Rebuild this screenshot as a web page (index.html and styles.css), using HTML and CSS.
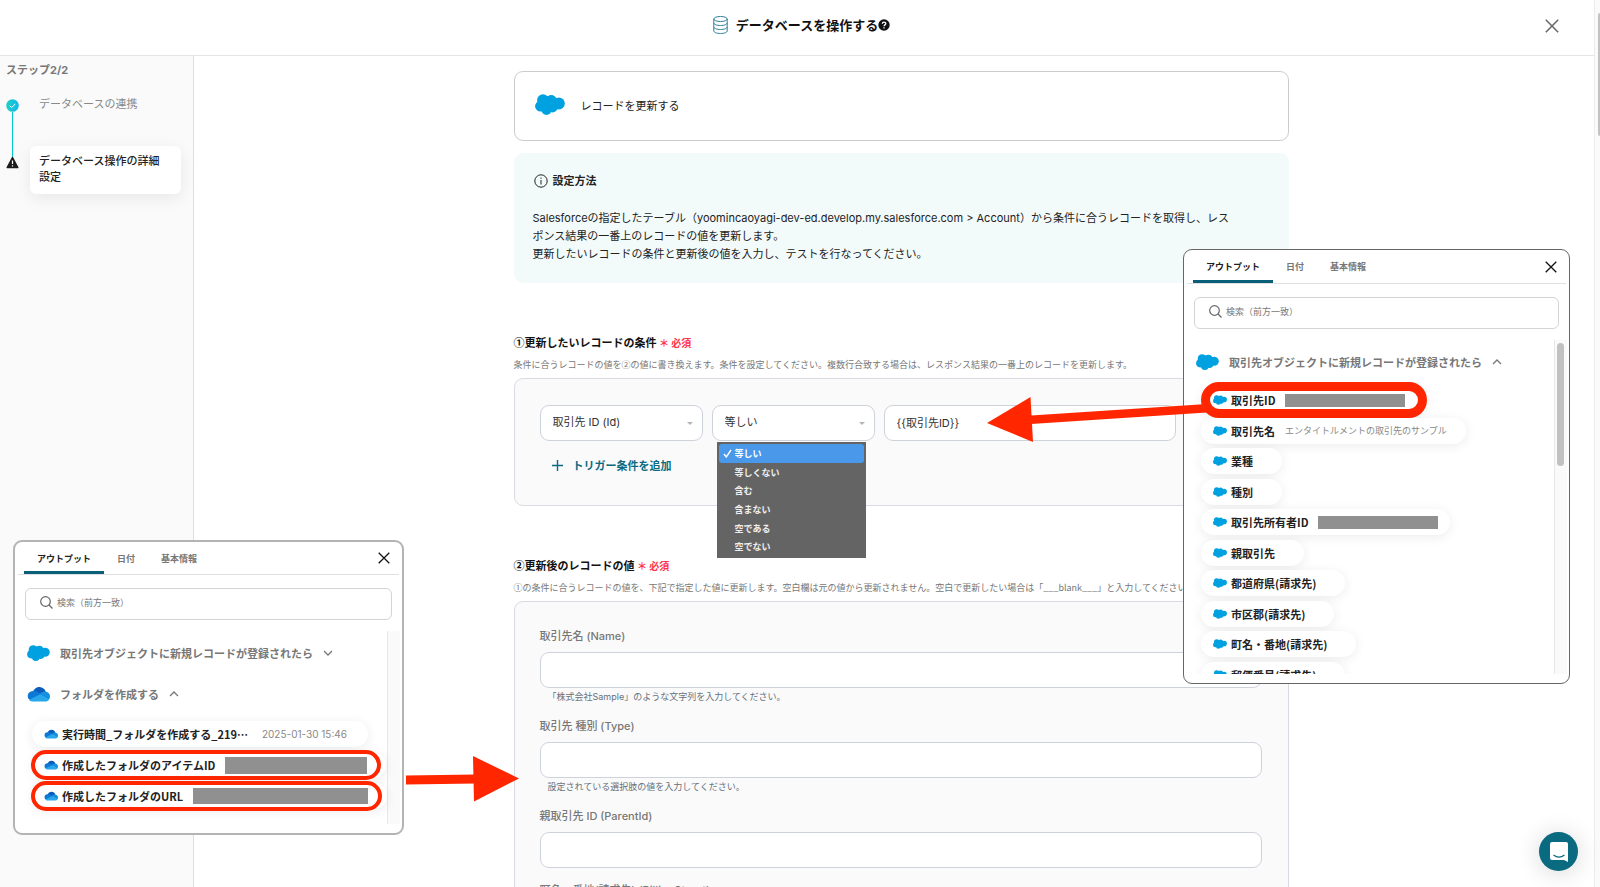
FILE: index.html
```
<!DOCTYPE html>
<html lang="ja">

<head>
    <meta charset="UTF-8">
    <meta name="viewport" content="width=device-width, initial-scale=1.0">
    <title>データベースを操作する</title>
    <link rel="stylesheet" href="styles.css">
</head>

<body>

    <!-- shared icons -->
    <svg class="sprite" aria-hidden="true">
        <symbol id="salesforce" viewBox="0 0 30 21">
            <g fill="#00a1e0">
                <circle cx="8" cy="6.2" r="5.9"/>
                <circle cx="16.3" cy="6" r="5"/>
                <circle cx="23.8" cy="9.5" r="6"/>
                <circle cx="5.5" cy="12.2" r="5.4"/>
                <circle cx="11.5" cy="15.800" r="5.1"/>
                <circle cx="17.5" cy="13.500" r="5"/>
                <ellipse cx="14" cy="10" rx="11" ry="8"/>
            </g>
        </symbol>
        <symbol id="onedrive" viewBox="0 0 24 16">
            <path fill="#0a5dbb" d="M6 6.2C7.2 2.4 10 .4 13.2.6c3 .2 5.4 2 6.3 4.9L13 10z"/>
            <path fill="#0d78d6" d="M5 5.2c2.400-.600 4.600-.2 6.500 1L16 9 3.500 14.600A5 5 0 0 1 5 5.200z"/>
            <path fill="#1590df" d="M19 5.400c3 .1 5 2.300 5 5 0 1.500-.5 2.700-1.400 3.700L12.500 8.200C14.500 6.600 16.500 5.300 19 5.400z"/>
            <path fill="#28a8ea" d="M13.500 8.400l9.700 5c-.9 1.500-2.300 2.400-4.200 2.400H5.500c-1.500 0-2.600-.6-3.400-1.700z"/>
        </symbol>
        <symbol id="close" viewBox="0 0 12 12">
            <path d="M.7.7l10.600 10.600M11.300.7L.7 11.300" fill="none" stroke="currentColor" stroke-width="1.300"/>
        </symbol>
        <symbol id="search" viewBox="0 0 13 13">
            <circle cx="5.500" cy="5.500" r="4.800" fill="none" stroke="currentColor" stroke-width="1.200"/>
            <path d="M9 9l3.500 3.500" fill="none" stroke="currentColor" stroke-width="1.200"/>
        </symbol>
        <symbol id="up" viewBox="0 0 10 6">
            <path d="M1 5l4-4 4 4" fill="none" stroke="currentColor" stroke-width="1.300"/>
        </symbol>
        <symbol id="down" viewBox="0 0 10 6">
            <path d="M1 1l4 4 4-4" fill="none" stroke="currentColor" stroke-width="1.300"/>
        </symbol>
    </svg>

    <header class="header">
        <svg class="db-icon" viewBox="0 0 15 18" fill="none" stroke="#2f8299">
            <ellipse cx="7.500" cy="3" rx="6.700" ry="2.500"/>
            <path d="M.8 3v12c0 1.400 3 2.500 6.700 2.500s6.700-1.100 6.700-2.500V3M.8 7c0 1.400 3 2.500 6.700 2.500S14.200 8.400 14.200 7M.8 11c0 1.400 3 2.500 6.700 2.500s6.700-1.100 6.700-2.500"/>
        </svg>
        <h1 class="title">データベースを操作する</h1>
        <svg class="help-icon" viewBox="0 0 12 12">
            <circle cx="6" cy="6" r="5.700" fill="#111"/>
            <path d="M4.300 4.700c0-2.200 3.500-2.200 3.500-.1C7.800 5.900 6 5.900 6 7.300M6 8.300v1.300" fill="none" stroke="#fff" stroke-width="1.300"/>
        </svg>
        <button class="header-close" aria-label="閉じる"><svg><use href="#close"/></svg></button>
    </header>

    <div class="page">
        <aside class="sidebar">
            <div class="step-count">ステップ2/2</div>
            <ol class="steps">
                <li class="step">
                    <svg class="step-icon" viewBox="0 0 13 13">
                        <defs>
                            <linearGradient id="done"><stop offset="0" stop-color="#1fcfc4"/><stop offset="1" stop-color="#12b8ee"/></linearGradient>
                        </defs>
                        <circle cx="6.500" cy="6.500" r="6.300" fill="url(#done)"/>
                        <path d="M3.700 6.700l2 2 3.600-3.900" fill="none" stroke="#fff"/>
                    </svg>
                    <span class="step-name">データベースの連携</span>
                </li>
                <li class="step">
                    <svg class="step-icon" viewBox="0 0 13 13">
                        <path d="M6.500 1.500l5.300 10H1.200z" fill="#1c1c1c" stroke="#1c1c1c" stroke-width="1.500" stroke-linejoin="round"/>
                        <path d="M6.500 4.500v3.500M6.500 9.200v1.400" stroke="#fff" stroke-width="1.200"/>
                    </svg>
                    <span class="step-name active">データベース操作の詳細設定</span>
                </li>
            </ol>
        </aside>

        <main class="main">
            <div class="content">
                <div class="action-card">
                    <svg class="action-icon"><use href="#salesforce"/></svg>
                    <span>レコードを更新する</span>
                </div>

                <section class="info">
                    <h2 class="info-title">
                        <svg class="info-icon" viewBox="0 0 14 14" fill="none" stroke="#222">
                            <circle cx="7" cy="7" r="6.200"/>
                            <path d="M7 6v4.500M7 3.500v1.300"/>
                        </svg>
                        設定方法
                    </h2>
                    <p class="info-text">Salesforceの指定したテーブル（yoomincaoyagi-dev-ed.develop.my.salesforce.com &gt; Account）から条件に合うレコードを取得し、レス<br>ポンス結果の一番上のレコードの値を更新します。<br>更新したいレコードの条件と更新後の値を入力し、テストを行なってください。</p>
                </section>

                <section class="block">
                    <h2 class="block-title">①更新したいレコードの条件 <span class="required">＊ 必須</span></h2>
                    <p class="block-note">条件に合うレコードの値を②の値に書き換えます。条件を設定してください。複数行合致する場合は、レスポンス結果の一番上のレコードを更新します。</p>
                    <div class="panel">
                        <div class="condition">
                            <div class="select-box">
                                <select class="control" aria-label="項目">
                                    <option>取引先 ID (Id)</option>
                                </select>
                            </div>
                            <div class="select-box">
                                <select class="control" aria-label="条件">
                                    <option>等しい</option>
                                    <option>等しくない</option>
                                    <option>含む</option>
                                    <option>含まない</option>
                                    <option>空である</option>
                                    <option>空でない</option>
                                </select>
                                <ul class="menu">
                                    <li class="menu-item selected">
                                        <svg class="check" viewBox="0 0 9 9"><path d="M1 5l2.300 3L8 1" fill="none" stroke="#fff" stroke-width="1.400"/></svg>等しい
                                    </li>
                                    <li class="menu-item">等しくない</li>
                                    <li class="menu-item">含む</li>
                                    <li class="menu-item">含まない</li>
                                    <li class="menu-item">空である</li>
                                    <li class="menu-item">空でない</li>
                                </ul>
                            </div>
                            <input class="control value" type="text" value="{{取引先ID}}" aria-label="値">
                        </div>
                        <button class="add">
                            <svg class="plus" viewBox="0 0 11 11"><path d="M5.500 0v11M0 5.500h11" stroke="currentColor" stroke-width="1.400"/></svg>
                            トリガー条件を追加
                        </button>
                    </div>
                </section>

                <section class="block">
                    <h2 class="block-title">②更新後のレコードの値 <span class="required">＊ 必須</span></h2>
                    <p class="block-note">①の条件に合うレコードの値を、下記で指定した値に更新します。空白欄は元の値から更新されません。空白で更新したい場合は「___blank___」と入力してください。</p>
                    <div class="panel fields">
                        <div class="field">
                            <label class="field-label" for="name">取引先名 (Name)</label>
                            <input class="control" type="text" id="name">
                            <p class="field-note">「株式会社Sample」のような文字列を入力してください。</p>
                        </div>
                        <div class="field">
                            <label class="field-label" for="type">取引先 種別 (Type)</label>
                            <input class="control" type="text" id="type">
                            <p class="field-note">設定されている選択肢の値を入力してください。</p>
                        </div>
                        <div class="field">
                            <label class="field-label" for="parent">親取引先 ID (ParentId)</label>
                            <input class="control" type="text" id="parent">
                        </div>
                        <div class="field">
                            <label class="field-label" for="street">町名・番地(請求先) (BillingStreet)</label>
                            <input class="control" type="text" id="street">
                        </div>
                    </div>
                </section>
            </div>
        </main>
    </div>

    <div class="page-scroll"><div class="page-thumb"></div></div>

    <section class="popup popup-left">
        <div class="tabs">
            <button class="tab current">アウトプット</button>
            <button class="tab">日付</button>
            <button class="tab">基本情報</button>
            <button class="popup-close" aria-label="閉じる"><svg><use href="#close"/></svg></button>
        </div>
        <div class="search">
            <svg class="search-icon"><use href="#search"/></svg>
            <input class="search-input" type="text" placeholder="検索（前方一致）" aria-label="検索">
        </div>
        <div class="results">
            <div class="list">
                <button class="group">
                    <svg class="group-icon"><use href="#salesforce"/></svg>
                    取引先オブジェクトに新規レコードが登録されたら
                    <svg class="chevron"><use href="#down"/></svg>
                </button>
                <button class="group">
                    <svg class="group-icon"><use href="#onedrive"/></svg>
                    フォルダを作成する
                    <svg class="chevron"><use href="#up"/></svg>
                </button>
                <ul class="pills">
                    <li class="pill"><svg class="pill-icon"><use href="#onedrive"/></svg><b>実行時間_フォルダを作成する_219…</b><span class="date">2025-01-30 15:46</span></li>
                    <li class="pill marked-thin"><svg class="pill-icon"><use href="#onedrive"/></svg><b>作成したフォルダのアイテムID</b><i class="mask mask-item"></i></li>
                    <li class="pill marked-thin"><svg class="pill-icon"><use href="#onedrive"/></svg><b>作成したフォルダのURL</b><i class="mask mask-url"></i></li>
                </ul>
            </div>
            <div class="track"></div>
        </div>
    </section>

    <section class="popup popup-right">
        <div class="tabs">
            <button class="tab current">アウトプット</button>
            <button class="tab">日付</button>
            <button class="tab">基本情報</button>
            <button class="popup-close" aria-label="閉じる"><svg><use href="#close"/></svg></button>
        </div>
        <div class="search">
            <svg class="search-icon"><use href="#search"/></svg>
            <input class="search-input" type="text" placeholder="検索（前方一致）" aria-label="検索">
        </div>
        <div class="results">
            <div class="list">
                <button class="group">
                    <svg class="group-icon"><use href="#salesforce"/></svg>
                    取引先オブジェクトに新規レコードが登録されたら
                    <svg class="chevron"><use href="#up"/></svg>
                </button>
                <ul class="pills">
                    <li class="pill marked"><svg class="pill-icon"><use href="#salesforce"/></svg><b>取引先ID</b><i class="mask"></i></li>
                    <li class="pill"><svg class="pill-icon"><use href="#salesforce"/></svg><b>取引先名</b><span>エンタイトルメントの取引先のサンプル</span></li>
                    <li class="pill"><svg class="pill-icon"><use href="#salesforce"/></svg><b>業種</b></li>
                    <li class="pill"><svg class="pill-icon"><use href="#salesforce"/></svg><b>種別</b></li>
                    <li class="pill owner"><svg class="pill-icon"><use href="#salesforce"/></svg><b>取引先所有者ID</b><i class="mask"></i></li>
                    <li class="pill"><svg class="pill-icon"><use href="#salesforce"/></svg><b>親取引先</b></li>
                    <li class="pill"><svg class="pill-icon"><use href="#salesforce"/></svg><b>都道府県(請求先)</b></li>
                    <li class="pill"><svg class="pill-icon"><use href="#salesforce"/></svg><b>市区郡(請求先)</b></li>
                    <li class="pill"><svg class="pill-icon"><use href="#salesforce"/></svg><b>町名・番地(請求先)</b></li>
                    <li class="pill"><svg class="pill-icon"><use href="#salesforce"/></svg><b>郵便番号(請求先)</b></li>
                </ul>
            </div>
            <div class="track"><div class="thumb"></div></div>
        </div>
    </section>

    <svg class="arrow arrow-id" viewBox="0 0 220 46">
        <path d="M44 18.500L220 7v8.500L44 27z" fill="#ff2600"/>
        <path d="M0 26L43.500 0l2.500 45z" fill="#ff2600"/>
    </svg>
    <svg class="arrow arrow-fields" viewBox="0 0 113 46">
        <path d="M0 19.500l70-1v9l-70 1z" fill="#ff2600"/>
        <path d="M67 0l46 22.500L68 45.500z" fill="#ff2600"/>
    </svg>

    <button class="chat" aria-label="チャット">
        <svg class="chat-icon" viewBox="0 0 18 20">
            <path d="M2 0h14a2 2 0 0 1 2 2v18l-4-2H2a2 2 0 0 1-2-2V2a2 2 0 0 1 2-2z" fill="#fff"/>
            <path d="M3.500 13c3.500 2.600 7.500 2.600 11 0" fill="none" stroke="#0a6a80" stroke-width="1.200"/>
        </svg>
    </button>

</body>

</html>
```
FILE: styles.css
```
* {
    margin: 0;
    padding: 0;
    box-sizing: border-box;
}

body {
    position: relative;
    display: flex;
    flex-direction: column;
    height: 100vh;
    overflow: hidden;
    background-color: #fff;
    font-family: Inter, "Noto Sans CJK JP", sans-serif;
    font-size: 11px;
    color: #222;
}

ul,
ol {
    list-style: none;
}

button {
    border: none;
    background: none;
    font-family: inherit;
    font-size: 11px;
    color: inherit;
    cursor: pointer;
}

svg {
    display: block;
    flex-shrink: 0;
}

.sprite {
    position: absolute;
    width: 0;
    height: 0;
}

/* header */

.header {
    position: relative;
    display: flex;
    align-items: center;
    justify-content: center;
    flex-shrink: 0;
    height: 56px;
    padding: 0 0 5px 3px;
    border-bottom: 1px solid #e6e6e6;
}

.db-icon {
    width: 15px;
    height: 18px;
    margin-right: 8px;
}

.title {
    font-size: 13px;
    line-height: 20px;
    color: #111;
}

.help-icon {
    width: 12px;
    height: 12px;
}

.header-close {
    position: absolute;
    right: 41px;
    top: 19px;
    color: #666;
}

.header-close svg {
    width: 14px;
    height: 14px;
}

.page {
    display: flex;
    flex: 1;
    min-height: 0;
}

/* steps */

.sidebar {
    width: 194px;
    flex-shrink: 0;
    padding: 6px 12px 0 6px;
    background-color: #fafafa;
    border-right: 1px solid #dedede;
}

.step-count {
    line-height: 16px;
    font-weight: bold;
    color: #777;
}

.steps {
    padding-top: 18px;
}

.step {
    position: relative;
    display: flex;
    gap: 11px;
    height: 50px;
}

.step:last-child {
    height: auto;
}

.step:first-child::after {
    content: '';
    position: absolute;
    left: 6px;
    top: 16px;
    width: 1px;
    height: 46px;
    background-color: #00cbd2;
}

.step-icon {
    width: 13px;
    height: 13px;
    margin-top: 3px;
}

.step:last-child .step-icon {
    margin-top: 10px;
}

.step-name {
    padding-left: 9px;
    line-height: 16px;
    color: #888;
}

.step-name.active {
    flex: 1;
    padding: 7px 16px 9px 9px;
    border-radius: 6px;
    background-color: #fff;
    box-shadow: 0 4px 16px rgba(0, 0, 0, 0.08);
    font-weight: 500;
    color: #222;
}

/* main column */

.main {
    flex: 1;
    padding: 15px 0 0 8px;
    overflow: hidden;
}

.content {
    max-width: 775px;
    margin: 0 auto;
}

.action-card {
    display: flex;
    align-items: center;
    gap: 16px;
    height: 70px;
    padding: 0 20px 3px;
    border: 1px solid #ccc;
    border-radius: 9px;
}

.action-icon {
    width: 30px;
    height: 21px;
}

.info {
    margin-top: 12px;
    padding: 19px 19px 20px;
    border-radius: 9px;
    background-color: #f2fafa;
}

.info-title {
    display: flex;
    align-items: center;
    gap: 5px;
    padding-left: 1px;
    margin-bottom: 19px;
    font-size: 11px;
    line-height: 18px;
}

.info-icon {
    width: 14px;
    height: 14px;
}

.info-text {
    line-height: 18px;
}

.block {
    margin-top: 50px;
}

.block-title {
    font-family: "Noto Sans CJK JP", sans-serif;
    font-size: 11px;
    line-height: 18px;
    color: #111;
}

.required {
    font-size: 10px;
    color: #ff3347;
}

.block-note {
    margin: 6px 0;
    font-family: "Noto Sans CJK JP", sans-serif;
    font-size: 9px;
    line-height: 14px;
    white-space: nowrap;
    color: #777;
}

.panel {
    padding: 26px 26px 30px 25px;
    border: 1px solid #d8dce2;
    border-radius: 9px;
    background-color: #fafafa;
}

.control {
    display: block;
    width: 100%;
    height: 36px;
    padding: 0 12px 3px;
    border: 1px solid #ced2da;
    border-radius: 9px;
    background-color: #fff;
    font-family: inherit;
    font-size: 11px;
    color: #333;
    appearance: none;
}

.condition {
    display: flex;
    gap: 9px;
    padding-right: 86px;
}

.select-box {
    position: relative;
    width: 163px;
    flex-shrink: 0;
}

.select-box::after {
    content: '';
    position: absolute;
    right: 10px;
    top: 17px;
    border: 3px solid transparent;
    border-top-color: #b5b5b5;
}

.control.value {
    flex: 1;
    min-width: 0;
}

.menu {
    position: absolute;
    left: 5px;
    top: 37px;
    z-index: 1;
    display: flex;
    flex-direction: column;
    width: 149px;
    height: 116px;
    padding: 2px;
    background-color: #646464;
}

.menu-item {
    display: flex;
    align-items: center;
    flex: 1;
    padding-left: 16px;
    font-size: 9px;
    font-weight: bold;
    color: #eee;
}

.menu-item.selected {
    gap: 3px;
    padding-left: 4px;
    border-radius: 3px;
    background-color: #4a98ea;
    color: #fff;
}

.check {
    width: 9px;
    height: 9px;
}

.add {
    display: flex;
    align-items: center;
    gap: 10px;
    height: 20px;
    margin-top: 14px;
    padding-left: 12px;
    font-weight: 600;
    color: #0a6a80;
}

.plus {
    width: 11px;
    height: 11px;
}

.fields {
    display: flex;
    flex-direction: column;
    gap: 14px;
}

.field-label {
    display: block;
    margin-bottom: 8px;
    line-height: 16px;
    font-weight: 500;
    color: #777;
}

.field-note {
    margin-top: 2px;
    padding-left: 8px;
    font-size: 9px;
    line-height: 14px;
    color: #66707c;
}

/* window scrollbar */

.page-scroll {
    position: absolute;
    right: 0;
    top: 0;
    width: 6px;
    height: 100%;
    padding: 13px 0 0 3px;
    border-left: 1px solid #ececec;
    background-color: #fafafa;
}

.page-thumb {
    height: 123px;
    border-radius: 3px 0 0 3px;
    background-color: #c2c2c2;
}

/* output pickers */

.popup {
    position: absolute;
    z-index: 2;
    display: flex;
    flex-direction: column;
    border-radius: 9px;
    background-color: #fff;
}

.popup-left {
    left: 13px;
    top: 540px;
    width: 391px;
    height: 295px;
    border: 2px solid #b4b4b4;
}

.popup-right {
    right: 30px;
    top: 249px;
    width: 387px;
    height: 435px;
    border: 1px solid #666;
}

.tabs {
    display: flex;
    flex-shrink: 0;
    height: 33px;
    margin: 0 3px;
    padding: 0 6px;
    border-bottom: 1px solid #e0e0e0;
}

.popup-right .tabs {
    height: 34px;
}

.tab {
    padding: 3px 13px 0;
    font-size: 9px;
    font-weight: bold;
    color: #777;
    border-bottom: 3px solid transparent;
}

.tab.current {
    border-bottom-color: #0a5f78;
    color: #222;
}

.popup-close {
    margin-left: auto;
    padding-right: 3px;
    color: #111;
}

.popup-close svg {
    width: 12px;
    height: 12px;
}

.search {
    display: flex;
    align-items: center;
    flex-shrink: 0;
    gap: 4px;
    height: 32px;
    margin: 13px 10px 11px;
    padding: 0 0 3px 14px;
    border: 1px solid #d4d4d4;
    border-radius: 6px;
    color: #666;
}

.search-icon {
    width: 13px;
    height: 13px;
}

.search-input {
    flex: 1;
    border: none;
    outline: none;
    font-family: inherit;
    font-size: 9px;
}

.search-input::placeholder {
    color: #777;
}

.results {
    display: flex;
    flex: 1;
    min-height: 0;
    margin: 0 2px 9px 0;
    overflow: hidden;
}

.list {
    flex: 1;
    padding-top: 12px;
}

.group {
    display: flex;
    align-items: center;
    gap: 10px;
    height: 20px;
    margin: 0 0 21px 12px;
    font-weight: bold;
    color: #777;
}

.group-icon {
    width: 23px;
    height: 16px;
}

.chevron {
    width: 10px;
    height: 6px;
}

.pills {
    display: flex;
    flex-direction: column;
    align-items: flex-start;
    gap: 5px;
    margin: -4px 0 0 17px;
}

.popup-right .pills {
    justify-content: space-between;
    gap: 0;
    height: 301px;
    margin-top: -6px;
}

.pill {
    position: relative;
    display: flex;
    align-items: center;
    height: 26px;
    padding: 0 19px 0 12px;
    border-radius: 13px;
    background-color: #fff;
    box-shadow: 0 2px 12px rgba(0, 0, 0, 0.08);
    font-family: "Noto Sans CJK JP", sans-serif;
    font-size: 9px;
    white-space: nowrap;
    color: #888;
}

.pill b {
    margin: 0 10px 0 4px;
    font-size: 11px;
    color: #222;
}

.pill.marked {
    padding-right: 22px;
}

.pill.owner {
    padding-right: 12px;
}

.pill-icon {
    width: 14px;
    height: 10px;
}

.date {
    margin: 0 2px 0 4px;
    font-family: Inter, sans-serif;
    font-size: 10px;
}

.mask {
    width: 120px;
    height: 13px;
    background-color: #909090;
}

.mask-item {
    width: 142px;
    height: 17px;
}

.mask-url {
    width: 175px;
    height: 16px;
}

/* red rings round the pills to drag */

.marked::after,
.marked-thin::after {
    content: '';
    position: absolute;
    border: 9px solid #ff2600;
    border-radius: 18px;
    inset: -5px 0;
}

.marked-thin::after {
    border-width: 4px;
    border-radius: 15px;
    inset: -2px 5px -2px -1px;
}

.track {
    width: 13px;
    padding: 3px 3px 3px 2px;
    border-left: 1px solid #e8e8e8;
    background-color: #fafafa;
}

.thumb {
    width: 7px;
    height: 123px;
    border-radius: 4px;
    background-color: #c1c1c1;
}

.arrow {
    position: absolute;
    z-index: 3;
}

.arrow-id {
    right: 393px;
    top: 397px;
    width: 220px;
    height: 46px;
}

.arrow-fields {
    left: 406px;
    top: 756px;
    width: 113px;
    height: 46px;
}

/* chat launcher */

.chat {
    position: absolute;
    right: 22px;
    bottom: 16px;
    display: flex;
    align-items: center;
    justify-content: center;
    width: 39px;
    height: 39px;
    border-radius: 50%;
    background-color: #0a6a80;
    box-shadow: 0 2px 24px rgba(0, 0, 0, 0.16);
}

.chat-icon {
    width: 18px;
    height: 20px;
}
```
